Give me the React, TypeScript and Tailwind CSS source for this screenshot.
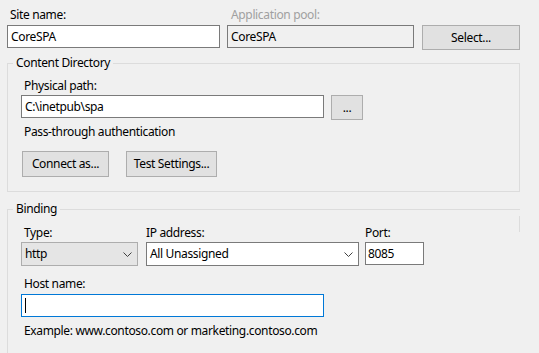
import React from 'react';

const font = "font-['Noto_Sans','Open_Sans',sans-serif]";

const Chevron: React.FC = () => (
  <svg width="9" height="5" viewBox="0 0 9 5" className="shrink-0">
    <polyline points="0.5,0.5 4.5,4.5 8.5,0.5" fill="none" stroke="#404040" strokeWidth="1" />
  </svg>
);

const Button: React.FC<{ label: string; className?: string }> = ({ label, className = '' }) => (
  <div
    className={`flex items-center justify-center border border-[#adadad] bg-[#e1e1e1] text-black ${className}`}
  >
    {label}
  </div>
);

export default function App() {
  return (
    <div
      className={`w-[539px] h-[353px] overflow-hidden bg-[#f0f0f0] text-[12px] leading-[16px] tracking-[-0.35px] text-black ${font}`}
    >
      {/* site name / app pool row */}
      <div className="flex items-start pt-[7px] pl-[7px]">
        <div className="flex w-[213px] flex-col">
          <div className="mb-[2px] h-[16px] pl-[3px]">Site name:</div>
          <div className="flex h-[23px] items-center border border-[#7a7a7a] bg-white pl-[3px]">CoreSPA</div>
        </div>
        <div className="ml-[7px] flex w-[187px] flex-col">
          <div className="mb-[2px] h-[16px] pl-[4px] text-[#a0a0a0]">Application pool:</div>
          <div className="flex h-[23px] items-center border border-[#7a7a7a] bg-[#f0f0f0] pl-[3px]">CoreSPA</div>
        </div>
        <Button label="Select..." className="ml-[8px] mt-[18px] h-[25px] w-[98px]" />
      </div>

      {/* content directory */}
      <fieldset className="mx-[7px] mt-[5px] w-[513px] border border-[#dcdcdc]">
        <legend className="ml-[5px] px-[3px] leading-[16px]">Content Directory</legend>
        <div className="flex flex-col pl-[13px] pt-[7px] pb-[14px]">
          <div className="mb-[1px] h-[16px] pl-[3px]">Physical path:</div>
          <div className="flex items-start">
            <div className="flex h-[23px] w-[303px] items-center border border-[#7a7a7a] bg-white pl-[3px]">
              C:\inetpub\spa
            </div>
            <Button label="..." className="ml-[7px] h-[25px] w-[32px]" />
          </div>
          <div className="mt-[4px] h-[16px] pl-[3px]">Pass-through authentication</div>
          <div className="ml-[1px] mt-[11px] flex gap-[17px]">
            <Button label="Connect as..." className="h-[26px] w-[87px]" />
            <Button label="Test Settings..." className="h-[26px] w-[91px]" />
          </div>
        </div>
      </fieldset>

      {/* binding */}
      <fieldset className="relative mx-[7px] mt-[9px] w-[513px] border border-b-0 border-r-0 border-[#dcdcdc]">
        <legend className="ml-[5px] px-[3px] leading-[16px]">Binding</legend>
        <span className="absolute right-0 top-[-1px] h-[16px] w-[1px] bg-[#dcdcdc]" />
        <div className="flex flex-col pl-[13px] pt-[8px] pb-[40px]">
          <div className="flex items-start">
            <div className="flex w-[117px] flex-col">
              <div className="mb-[1px] h-[16px] pl-[3px]">Type:</div>
              <div className="flex h-[24px] items-center justify-between border border-[#adadad] bg-[#e5e5e5] pl-[3px] pr-[5px]">
                <span>http</span>
                <Chevron />
              </div>
            </div>
            <div className="ml-[8px] flex w-[213px] flex-col">
              <div className="mb-[1px] h-[16px]">IP address:</div>
              <div className="flex h-[24px] items-center justify-between border border-[#7a7a7a] bg-white pl-[3px] pr-[5px]">
                <span>All Unassigned</span>
                <Chevron />
              </div>
            </div>
            <div className="ml-[6px] flex w-[59px] flex-col">
              <div className="mb-[1px] h-[16px]">Port:</div>
              <div className="flex h-[23px] items-center border border-[#7a7a7a] bg-white pl-[2px]">8085</div>
            </div>
          </div>
          <div className="mt-[10px] mb-[2px] h-[16px] pl-[3px]">Host name:</div>
          <div className="flex h-[23px] w-[303px] items-center border border-[#0078d7] bg-white pl-[3px]">
            <div className="h-[15px] w-[1px] bg-black" />
          </div>
          <div className="mt-[6px] h-[16px] pl-[3px]">Example: www.contoso.com or marketing.contoso.com</div>
        </div>
      </fieldset>
    </div>
  );
}
